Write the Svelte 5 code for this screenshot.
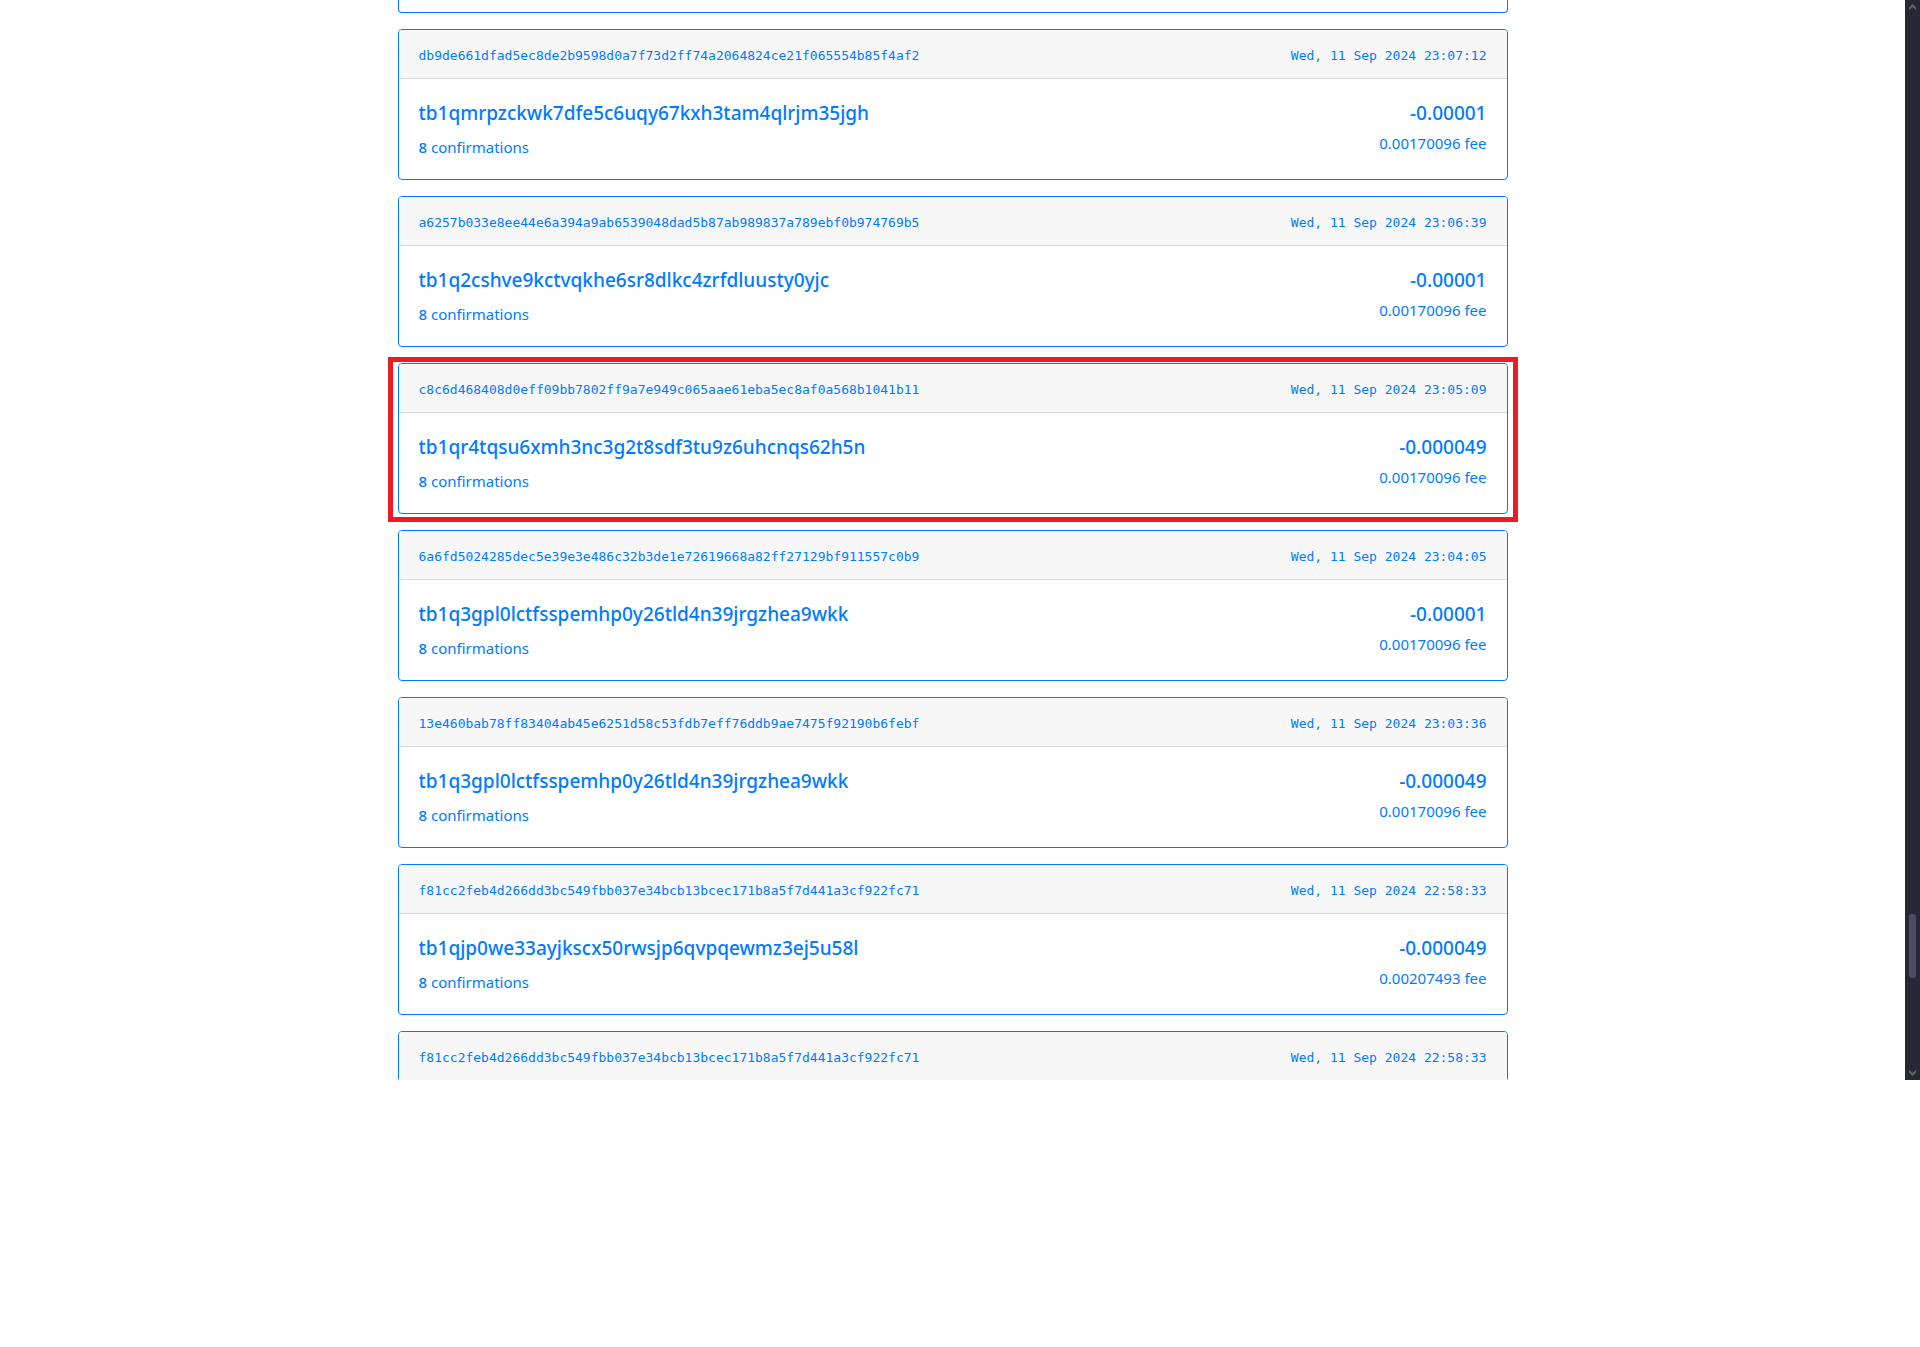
<script>
  const transactions = [
    { id: 'db9de661dfad5ec8de2b9598d0a7f73d2ff74a2064824ce21f065554b85f4af2', date: 'Wed, 11 Sep 2024 23:07:12', address: 'tb1qmrpzckwk7dfe5c6uqy67kxh3tam4qlrjm35jgh', amount: '-0.00001', fee: '0.00170096' },
    { id: 'a6257b033e8ee44e6a394a9ab6539048dad5b87ab989837a789ebf0b974769b5', date: 'Wed, 11 Sep 2024 23:06:39', address: 'tb1q2cshve9kctvqkhe6sr8dlkc4zrfdluusty0yjc', amount: '-0.00001', fee: '0.00170096' },
    { id: 'c8c6d468408d0eff09bb7802ff9a7e949c065aae61eba5ec8af0a568b1041b11', date: 'Wed, 11 Sep 2024 23:05:09', address: 'tb1qr4tqsu6xmh3nc3g2t8sdf3tu9z6uhcnqs62h5n', amount: '-0.000049', fee: '0.00170096', marked: true },
    { id: '6a6fd5024285dec5e39e3e486c32b3de1e72619668a82ff27129bf911557c0b9', date: 'Wed, 11 Sep 2024 23:04:05', address: 'tb1q3gpl0lctfsspemhp0y26tld4n39jrgzhea9wkk', amount: '-0.00001', fee: '0.00170096' },
    { id: '13e460bab78ff83404ab45e6251d58c53fdb7eff76ddb9ae7475f92190b6febf', date: 'Wed, 11 Sep 2024 23:03:36', address: 'tb1q3gpl0lctfsspemhp0y26tld4n39jrgzhea9wkk', amount: '-0.000049', fee: '0.00170096' },
    { id: 'f81cc2feb4d266dd3bc549fbb037e34bcb13bcec171b8a5f7d441a3cf922fc71', date: 'Wed, 11 Sep 2024 22:58:33', address: 'tb1qjp0we33ayjkscx50rwsjp6qvpqewmz3ej5u58l', amount: '-0.000049', fee: '0.00207493' },
    { id: 'f81cc2feb4d266dd3bc549fbb037e34bcb13bcec171b8a5f7d441a3cf922fc71', date: 'Wed, 11 Sep 2024 22:58:33' },
  ];
</script>

<div class="viewport">
  <main class="page">
    <div class="container">
      <div class="card-end"></div>
      {#each transactions as tx}
        <article class="card" class:marked={tx.marked}>
          <header class="card-header">
            <span>{tx.id}</span>
            <time>{tx.date}</time>
          </header>
          {#if tx.address}
            <div class="card-body">
              <div>
                <h5>{tx.address}</h5>
                <p class="confirmations"><strong>8</strong> confirmations</p>
              </div>
              <div class="totals">
                <h5>{tx.amount}</h5>
                <p>{tx.fee} fee</p>
              </div>
            </div>
          {/if}
        </article>
      {/each}
    </div>
  </main>
  <div class="scrollbar" aria-hidden="true">
    <svg class="arrow" viewBox="0 0 7 6"><path d="M0 6V3.5L3.5 0 7 3.5V6L3.5 3z" /></svg>
    <div class="track"><div class="thumb"></div></div>
    <svg class="arrow" viewBox="0 0 7 6"><path d="M0 0 3.5 3 7 0V2.5L3.5 6 0 2.5z" /></svg>
  </div>
</div>

<style>
  :global(body) {
    margin: 0;
    background: #fff;
  }
  .viewport {
    display: flex;
    height: 1080px;
    overflow: hidden;
    color: #007bff;
    font: 400 15px/24px 'Noto Sans', 'Open Sans', sans-serif;
  }
  .page {
    flex: 1;
    min-width: 0;
    overflow: hidden;
  }
  .container {
    box-sizing: border-box;
    max-width: 1140px;
    margin: 0 auto;
    padding: 0 15px;
  }
  .card,
  .card-end {
    position: relative;
    margin-bottom: 16px;
    border: 1px solid #007bff;
    border-radius: 4px;
  }
  .card-end {
    height: 12px;
    border-top: 0;
    border-top-left-radius: 0;
    border-top-right-radius: 0;
  }
  .marked::after {
    content: '';
    position: absolute;
    inset: -7px -11px -9px;
    border: 5px solid #ed1c24;
    pointer-events: none;
  }
  .card-header {
    display: flex;
    justify-content: space-between;
    gap: 16px;
    padding: 14px 20px 10px;
    border-bottom: 1px solid #d8d8d8;
    border-radius: 3px 3px 0 0;
    background: #f7f7f7;
    font-family: 'DejaVu Sans Mono', monospace;
    font-size: 13px;
  }
  .card-body {
    display: flex;
    justify-content: space-between;
    padding: 22px 20px 20px;
  }
  h5 {
    margin: 0 0 6px;
    font-size: 19px;
    font-weight: 500;
    line-height: 24px;
  }
  p {
    margin: 0;
  }
  strong {
    font-weight: 500;
  }
  .confirmations {
    padding-top: 4px;
  }
  .totals {
    text-align: right;
  }
  .scrollbar {
    box-sizing: border-box;
    display: flex;
    flex-direction: column;
    align-items: center;
    width: 15px;
    padding: 4px 0;
    background: #252935;
  }
  .arrow {
    width: 7px;
    height: 6px;
    fill: #666;
  }
  .track {
    display: flex;
    flex: 1;
    align-items: flex-end;
    padding-bottom: 92px;
  }
  .thumb {
    width: 7px;
    height: 64px;
    border-radius: 3px;
    background: #4b4b66;
  }
</style>
